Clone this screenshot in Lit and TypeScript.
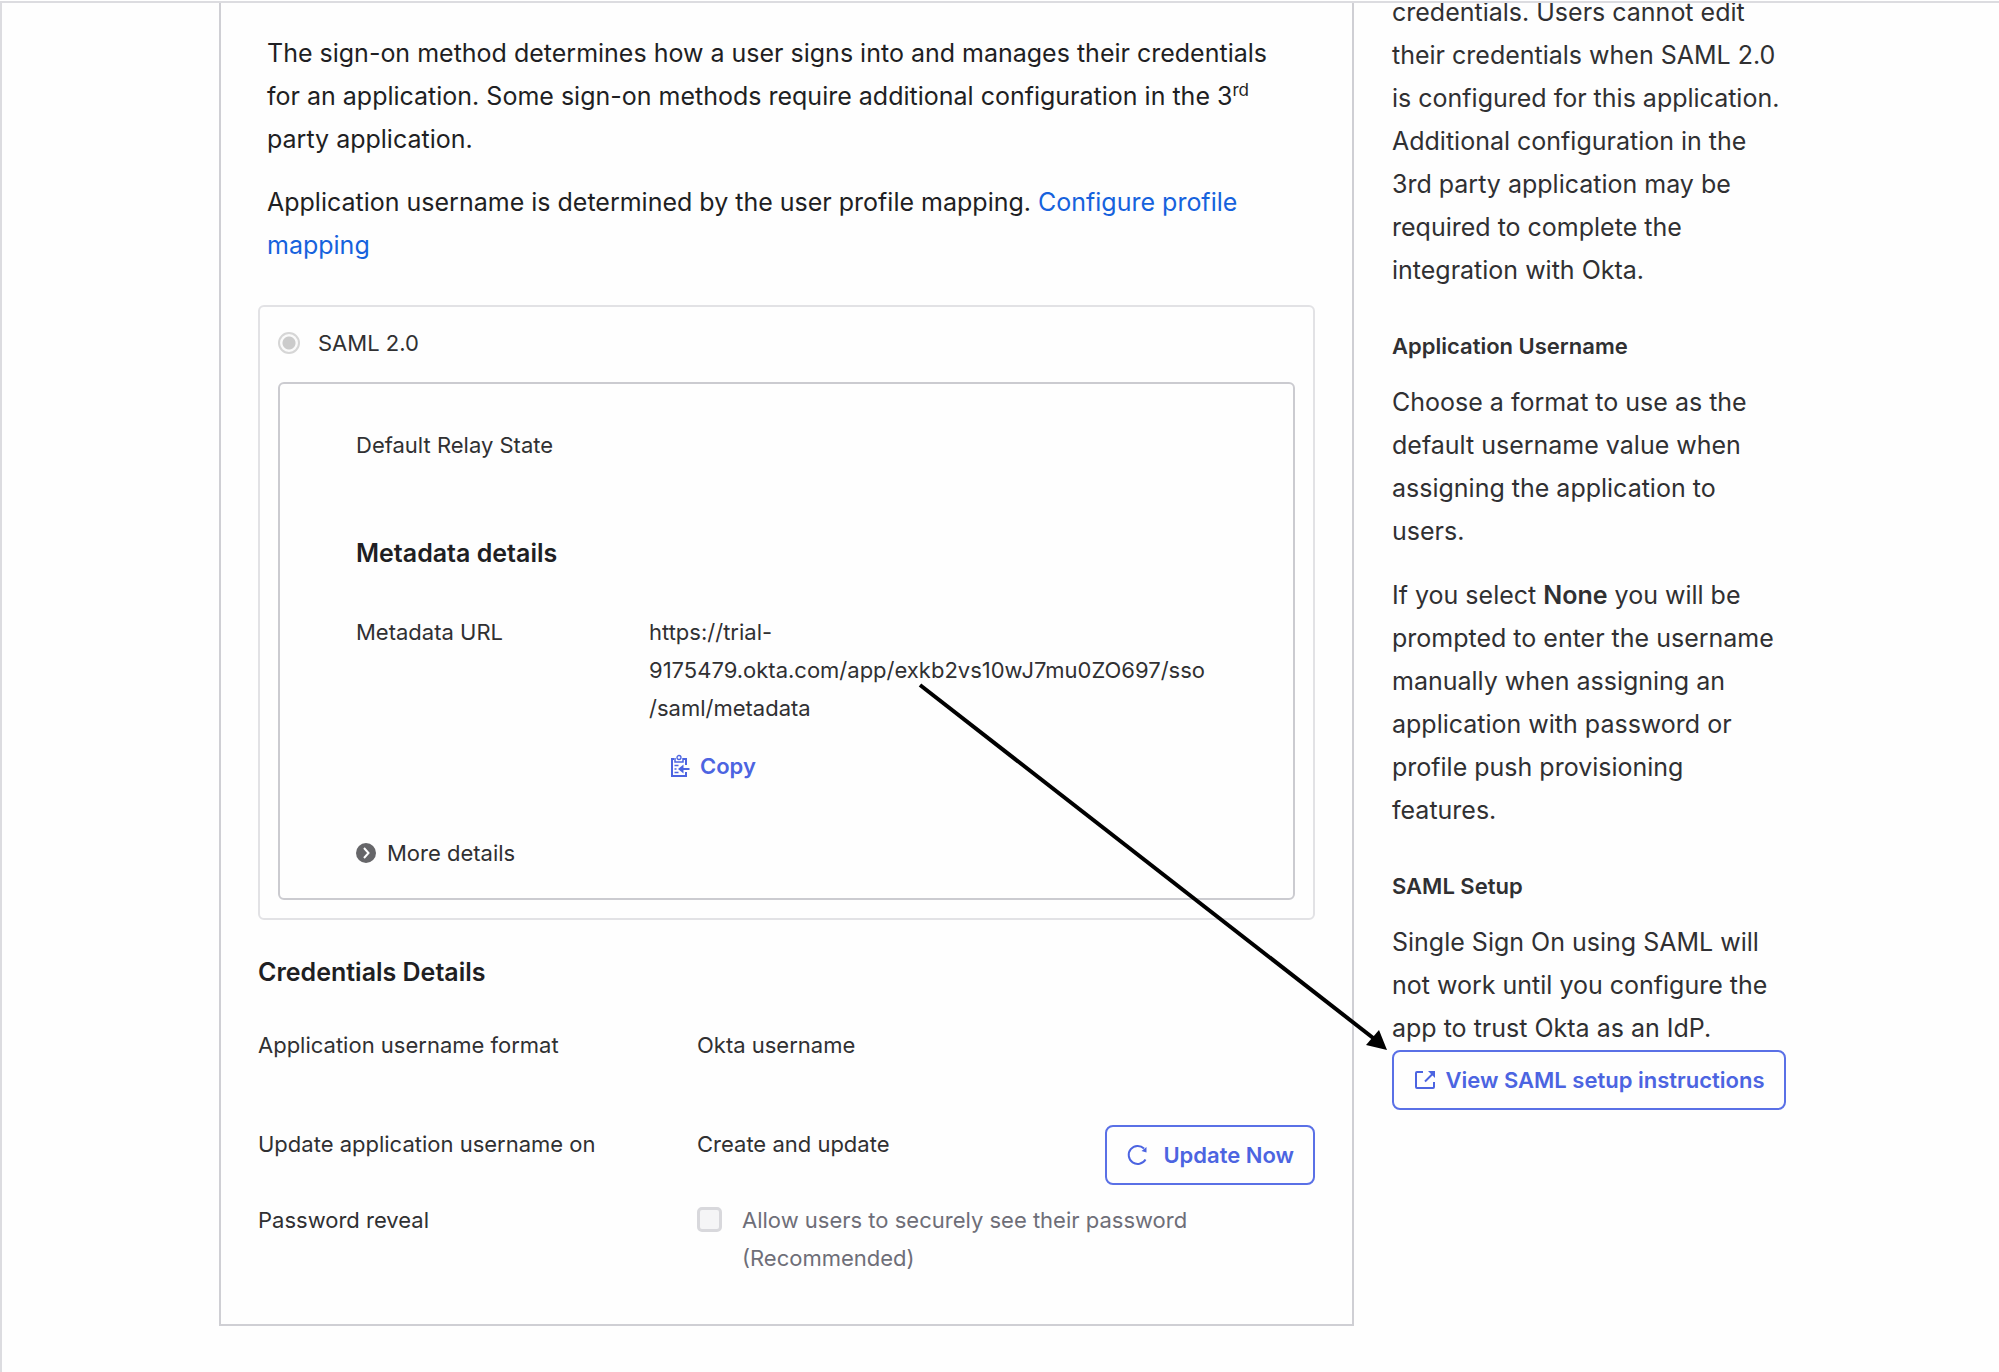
import { LitElement, html, css } from "lit";
import { customElement } from "lit/decorators.js";

@customElement("app-root")
export class AppRoot extends LitElement {
  static styles = css`
    :host {
      display: block;
      font-family: Inter, "Liberation Sans", sans-serif;
      font-size: 22px;
      line-height: 38px;
      color: #303032;
      background: #fefefe;
    }
    * { box-sizing: border-box; }
    h2, h3, h4, p, dl, dd, dt { margin: 0; }
    button, a.button {
      font: inherit;
      font-weight: 600;
      color: #4c64e1;
      background: transparent;
      cursor: pointer;
    }
    svg { flex: none; display: block; }
    .page {
      position: relative;
      min-height: calc(100vh - 1px);
      margin-top: 1px;
      border-top: 2px solid #dcdce0;
      border-left: 2px solid #dcdce0;
      padding: 0 213px 46px 217px;
      overflow: hidden;
      display: grid;
      grid-template-columns: minmax(0, 1fr) 394px;
      gap: 38px;
      align-items: start;
    }
    .main {
      border: 2px solid #cfcfd4;
      border-top: 0;
      padding: 29px 37px 47px;
    }
    .intro {
      display: grid;
      gap: 20px;
      padding: 0 9px;
      font-size: 25px;
      line-height: 43px;
      color: #1f1f23;
    }
    .intro sup { font-size: 17px; line-height: 0; }
    .intro a { color: #1662dd; text-decoration: none; }
    .method {
      margin-top: 38px;
      border: 2px solid #e2e2e5;
      border-radius: 6px;
      padding: 0 18px 18px;
    }
    .choice {
      display: flex;
      align-items: center;
      gap: 18px;
      height: 75px;
      padding-bottom: 3px;
    }
    .radio {
      appearance: none;
      width: 22px;
      height: 22px;
      margin: 0;
      border: 2px solid #d6d6d6;
      border-radius: 50%;
      background: radial-gradient(circle, #cbcbcb 6px, #fafafa 7px);
    }
    .details {
      border: 2px solid #cbcbd0;
      border-radius: 6px;
      padding: 42px 73px 26px 76px;
    }
    h3 { font-size: 25px; line-height: 40px; font-weight: 600; color: #1f1f23; }
    .details h3 { margin: 69px 0 40px; }
    .meta {
      display: grid;
      grid-template-columns: 293px minmax(0, 1fr);
    }
    .url { overflow-wrap: anywhere; }
    .copy {
      display: flex;
      align-items: center;
      gap: 10px;
      border: 0;
      padding: 0;
      margin: 20px 0 0 21px;
    }
    .more {
      display: flex;
      align-items: center;
      gap: 11px;
      margin-top: 49px;
      border: 0;
      padding: 0;
      font-weight: 400;
      color: inherit;
    }
    .credentials { margin-top: 32px; }
    .row {
      display: grid;
      grid-template-columns: 439px minmax(0, 1fr) auto;
      align-items: start;
    }
    .row.format { margin-top: 34px; }
    .row.update { margin-top: 61px; }
    .row.reveal { margin-top: 16px; }
    .button {
      display: flex;
      align-items: center;
      justify-content: center;
      height: 60px;
      border: 2px solid #5a70e6;
      border-radius: 8px;
      padding: 0 19px;
      text-decoration: none;
      white-space: nowrap;
    }
    .update .button { gap: 14px; }
    .check { display: flex; align-items: flex-start; gap: 20px; color: #6e6e78; max-width: 520px; }
    .check input {
      appearance: none;
      flex: none;
      width: 25px;
      height: 25px;
      margin: 6px 0 0;
      border: 3px solid #d8d8dc;
      border-radius: 5px;
      background: #f5f5f6;
    }
    .side { margin-top: -12px; font-size: 25px; line-height: 43px; }
    .side h4 { font-size: 22px; line-height: 38px; font-weight: 600; margin: 35px 0 16px; }
    .side p + p { margin-top: 21px; }
    .side b { font-weight: 600; }
    .side .button { gap: 10px; font-size: 22px; line-height: 38px; padding: 0 10px; }
    .arrow {
      position: absolute;
      left: 915px;
      top: 679px;
      pointer-events: none;
    }
  `;

  render() {
    return html`
      <div class="page">
        <main class="main">
          <div class="intro">
            <p>The sign-on method determines how a user signs into and manages their credentials for an application. Some sign-on methods require additional configuration in the 3<sup>rd</sup> party application.</p>
            <p>Application username is determined by the user profile mapping. <a href="#mapping">Configure profile mapping</a></p>
          </div>

          <section class="method">
            <label class="choice"><input class="radio" type="radio" name="method" checked disabled />SAML 2.0</label>
            <div class="details">
              <div>Default Relay State</div>
              <h3>Metadata details</h3>
              <dl class="meta">
                <dt>Metadata URL</dt>
                <dd>
                  <div class="url">https://trial-9175479.okta.com/app/exkb2vs10wJ7mu0ZO697/sso<wbr />/saml/metadata</div>
                  <button class="copy" type="button">
                    <svg width="20" height="24" viewBox="0 0 20 24" fill="none" stroke="currentColor" stroke-width="2">
                      <path d="M4 5H2v17h14v-4M13 5h3v6" />
                      <path d="M5 4v4h8V4" stroke-width="1.500" />
                      <circle cx="9" cy="3.500" r="2" stroke-width="1.300" />
                      <path d="M4.500 11.500h4M4.500 15h2M4.500 18.500h4" stroke-width="1.500" />
                      <path d="M19.500 15h-8" /><path d="M8 15l5.500-4.500v9z" fill="currentColor" stroke="none" />
                    </svg>
                    Copy
                  </button>
                </dd>
              </dl>
              <button class="more" type="button">
                <svg width="20" height="20" viewBox="0 0 20 20">
                  <circle cx="10" cy="10" r="10" fill="#666669" />
                  <path d="M8 5l4.500 5L8 15" fill="none" stroke="#fff" stroke-width="2" />
                </svg>
                More details
              </button>
            </div>
          </section>

          <section class="credentials">
            <h3>Credentials Details</h3>
            <div class="row format"><div>Application username format</div><div>Okta username</div></div>
            <div class="row update">
              <div>Update application username on</div>
              <div>Create and update</div>
              <button class="button" type="button">
                <svg width="23" height="24" viewBox="0 0 23 24" fill="none" stroke="currentColor" stroke-width="2">
                  <path d="M19.500 16.500a9 9 0 1 1-1.500-11" /><path d="M20.500 4v5.500l-5-1.500z" fill="currentColor" stroke="none" />
                </svg>
                Update Now
              </button>
            </div>
            <div class="row reveal">
              <div>Password reveal</div>
              <label class="check"><input type="checkbox" disabled /><span>Allow users to securely see their password (Recommended)</span></label>
            </div>
          </section>
        </main>

        <aside class="side">
          <p>credentials. Users cannot edit their credentials when SAML 2.0 is configured for this application. Additional configuration in the 3rd party application may be required to complete the integration with Okta.</p>
          <h4>Application Username</h4>
          <p>Choose a format to use as the default username value when assigning the application to users.</p>
          <p>If you select <b>None</b> you will be prompted to enter the username manually when assigning an application with password or profile push provisioning features.</p>
          <h4>SAML Setup</h4>
          <p>Single Sign On using SAML will not work until you configure the app to trust Okta as an IdP.</p>
          <a class="button" href="#saml-setup">
            <svg width="22" height="20" viewBox="0 0 22 20" fill="none" stroke="currentColor" stroke-width="2">
              <path d="M9 2H3a1 1 0 0 0-1 1v14a1 1 0 0 0 1 1h16a1 1 0 0 0 1-1v-5" /><path d="M11 11.500L18.500 4" /><path d="M14 1h7v7z" fill="currentColor" stroke="none" />
            </svg>
            View SAML setup instructions
          </a>
        </aside>

        <svg class="arrow" width="476" height="374" viewBox="0 0 476 374" aria-hidden="true">
          <path d="M3 3L460 359" stroke="#000" stroke-width="4" />
          <path d="M470 368l-21-5 13-15z" fill="#000" />
        </svg>
      </div>
    `;
  }
}
